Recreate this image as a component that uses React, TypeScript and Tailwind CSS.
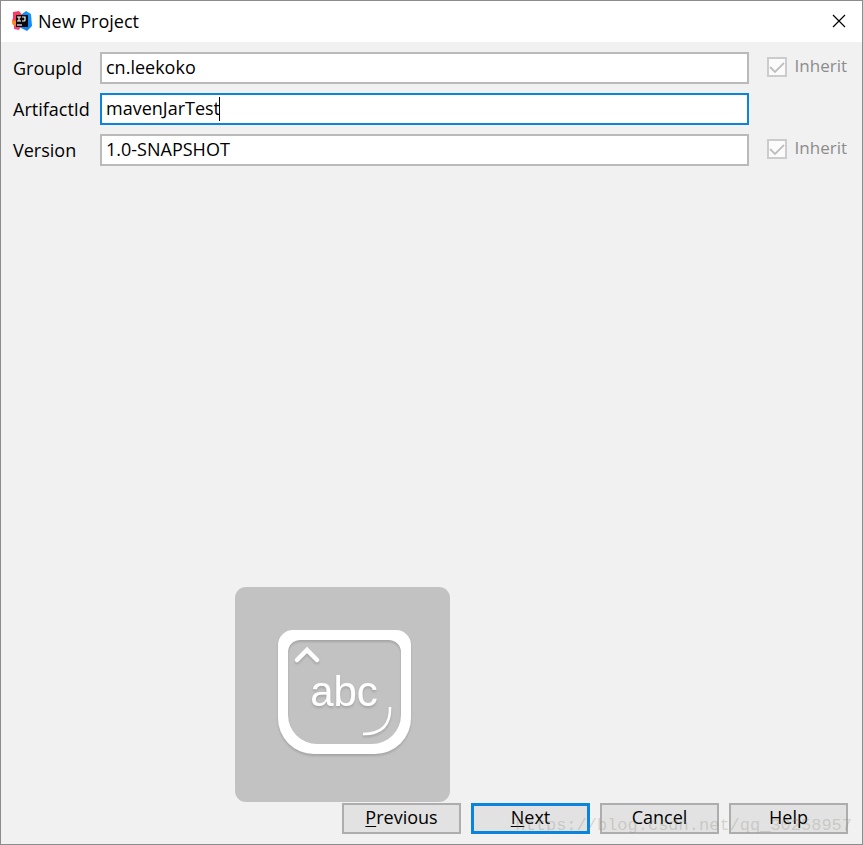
import { useState } from 'react'

const fieldFont = "font-['Open_Sans','Noto_Sans',sans-serif]"

function AppLogo() {
  return (
    <svg width="22" height="22" viewBox="0 0 22 22" aria-hidden="true">
      <defs>
        <linearGradient id="logoBlue" x1="0" y1="1" x2="1" y2="0">
          <stop offset="0" stopColor="#3f7de0" />
          <stop offset="0.4" stopColor="#0b84f5" />
          <stop offset="1" stopColor="#1b9bfd" />
        </linearGradient>
      </defs>
      <path d="M11 4l4-3 5 3 1 12-5 5-8-4z" fill="url(#logoBlue)" />
      <path d="M2 2l6-1 4 5-2 10-6-1-3-4 1-3z" fill="#fb3b67" />
      <path d="M1 10l4 1v5l-3-1-1-2z" fill="#f98b1c" />
      <path d="M3 15l7 1-2 4-5-1z" fill="#f4427a" />
      <rect x="5" y="5" width="12" height="12" fill="#0c0a0c" />
      <path
        d="M6 7h4M8 7v4M6 11h4M11 7h3v3q0 1-1 1h-2"
        fill="none"
        stroke="#fff"
        strokeWidth="1.200"
      />
      <path d="M6 15h5" stroke="#fff" strokeWidth="1.200" />
    </svg>
  )
}

function InputModeIndicator() {
  return (
    <div className="pointer-events-none absolute bottom-[42px] left-[234px]">
      <svg width="215" height="215" viewBox="0 0 215 215" role="img" aria-label="abc">
        <defs>
          <filter id="glyphShadow" x="-20%" y="-20%" width="140%" height="140%">
            <feDropShadow dx="0" dy="2" stdDeviation="1" floodColor="#777" floodOpacity="0.4" />
          </filter>
        </defs>
        <rect width="215" height="215" rx="11" fill="#c2c2c2" />
        <g filter="url(#glyphShadow)">
          <path
            fillRule="evenodd"
            fill="#fff"
            d="M58 43H161A15 15 0 0 1 176 58V131A36 36 0 0 1 140 167H79A36 36 0 0 1 43 131V58A15 15 0 0 1 58 43ZM65 53A12 12 0 0 0 53 65V128A29 29 0 0 0 82 157H137A29 29 0 0 0 166 128V65A12 12 0 0 0 154 53Z"
          />
          <path d="M62 73l10-10 10 10" fill="none" stroke="#fff" strokeWidth="4.500" strokeLinecap="round" />
          <path d="M155 120q1 27-27 27" fill="none" stroke="#fff" strokeWidth="2.500" />
          <text
            x="109"
            y="119"
            textAnchor="middle"
            fill="#fff"
            className="font-['Liberation_Sans',sans-serif] text-[42px]"
          >
            abc
          </text>
        </g>
      </svg>
    </div>
  )
}

function InheritCheckbox({ id }: { id: string }) {
  return (
    <div className="flex items-center gap-2 pb-[2px] pl-[18px] text-[17px] text-[#8c8c8c]">
      <span className="relative flex">
        <input
          id={id}
          type="checkbox"
          checked
          disabled
          readOnly
          className="size-5 appearance-none border-2 border-[#cccccc] bg-[#fbfbfb]"
        />
        <svg className="pointer-events-none absolute inset-0" width="20" height="20" viewBox="0 0 20 20">
          <path d="M3 10l5 5 9-9" fill="none" stroke="#bfbfbf" strokeWidth="1.800" />
        </svg>
      </span>
      <label htmlFor={id} className="pb-[2px]">
        Inherit
      </label>
    </div>
  )
}

const inputClass = 'h-8 w-full border-2 bg-white px-1 pb-[2px] outline-none'

const buttons = [
  { label: 'Previous', mnemonic: true, primary: false },
  { label: 'Next', mnemonic: true, primary: true },
  { label: 'Cancel', mnemonic: false, primary: false },
  { label: 'Help', mnemonic: false, primary: false },
]

export default function App() {
  const [groupId, setGroupId] = useState('cn.leekoko')
  const [artifactId, setArtifactId] = useState('mavenJarTest')
  const [version, setVersion] = useState('1.0-SNAPSHOT')

  return (
    <div
      className={`relative flex min-h-screen flex-col border border-[#8c8c8c] bg-[#f1f1f1] text-[18px] leading-6 text-black ${fieldFont}`}
    >
      {/* Title bar */}
      <header className="flex h-[41px] items-center bg-white pr-3 pb-[2px] pl-[10px]">
        <AppLogo />
        <h1 className="ml-[5px]">New Project</h1>
        <button type="button" aria-label="Close" className="ml-auto p-1">
          <svg width="14" height="14" viewBox="0 0 14 14">
            <path d="M1 1l12 12M13 1L1 13" stroke="#000" strokeWidth="1.200" />
          </svg>
        </button>
      </header>

      {/* Maven coordinates */}
      <main className="grid grid-cols-[87px_1fr_auto] items-center gap-y-[9px] pt-[10px] pr-[15px] pl-3">
        <label htmlFor="groupId">GroupId</label>
        <input
          id="groupId"
          value={groupId}
          onChange={(e) => setGroupId(e.target.value)}
          className={`${inputClass} border-[#bababa]`}
        />
        <InheritCheckbox id="inheritGroup" />

        <label htmlFor="artifactId">ArtifactId</label>
        <div className="relative">
          <input
            id="artifactId"
            value={artifactId}
            onChange={(e) => setArtifactId(e.target.value)}
            className={`${inputClass} block border-[#0a84dc]`}
          />
          <span className="absolute top-1 left-[119px] h-6 w-px bg-black" />
        </div>
        <span />

        <label htmlFor="version">Version</label>
        <input
          id="version"
          value={version}
          onChange={(e) => setVersion(e.target.value)}
          className={`${inputClass} border-[#bababa]`}
        />
        <InheritCheckbox id="inheritVersion" />
      </main>

      <InputModeIndicator />

      {/* Wizard buttons */}
      <footer className="relative mt-auto flex justify-end gap-[10px] pr-[14px] pb-[10px]">
        {buttons.map(({ label, mnemonic, primary }) => (
          <button
            key={label}
            type="button"
            className={`flex h-[31px] w-[119px] justify-center bg-[#e2e2e2] ${
              primary ? 'border-3 border-[#0a84dc] leading-[22px]' : 'border-2 border-[#adadad] leading-6'
            }`}
          >
            {mnemonic ? (
              <span>
                <span className="underline decoration-1 underline-offset-2">{label[0]}</span>
                {label.slice(1)}
              </span>
            ) : (
              label
            )}
          </button>
        ))}
      </footer>

      <span className="pointer-events-none absolute right-[10px] bottom-[6px] font-['Liberation_Mono',monospace] text-[17px] text-[#8a8a7a]/30">
        https://blog.csdn.net/qq_30258957
      </span>
    </div>
  )
}
